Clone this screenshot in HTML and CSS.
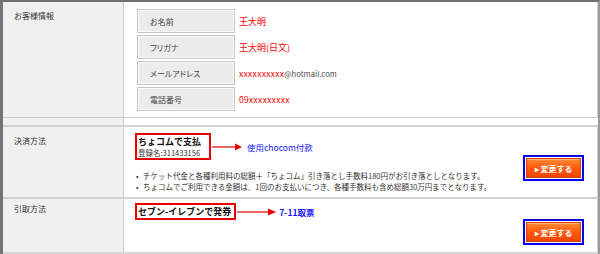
FILE: index.html
```html
<!DOCTYPE html>
<html lang="ja">
<head>
  <meta charset="UTF-8">
  <title>ご注文内容の確認</title>
  <link rel="stylesheet" href="styles.css">
</head>
<body>

<div class="panel">
  <div class="row row-customer">
    <div class="head">お客様情報</div>
    <div class="body">
      <div class="info">
        <div class="key">お名前</div>
        <div class="value">王大明</div>
        <div class="key">フリガナ</div>
        <div class="value">王大明(日文)</div>
        <div class="key">メールアドレス</div>
        <div class="value mail">xxxxxxxxxx<span class="domain">@hotmail.com</span></div>
        <div class="key">電話番号</div>
        <div class="value phone">09xxxxxxxxx</div>
      </div>
    </div>
  </div>

  <div class="row row-pay">
    <div class="head">決済方法</div>
    <div class="body">
      <div class="main">
        <div class="method">
          <div class="tag">
            <div class="tag-title">ちょコムで支払</div>
            <div class="tag-sub">登録名:311433156</div>
          </div>
          <svg class="arrow" width="30" height="8" viewBox="0 0 30 8">
            <line x1="0" y1="4" x2="24" y2="4" stroke="#e60000" stroke-width="1.2"/>
            <polygon points="23,0.5 30,4 23,7.5" fill="#e60000"/>
          </svg>
          <span class="note">使用chocom付款</span>
        </div>
        <ul class="notes">
          <li>チケット代金と各種利用料の総額＋「ちょコム」引き落とし手数料180円がお引き落としとなります。</li>
          <li>ちょコムでご利用できる金額は、1回のお支払いにつき、各種手数料も含め総額30万円までとなります。</li>
        </ul>
      </div>
      <a class="change" href="#"><span>▸ 変更する</span></a>
    </div>
  </div>

  <div class="row row-pickup">
    <div class="head">引取方法</div>
    <div class="body">
      <div class="main">
        <div class="method">
          <div class="tag tag-line">セブン-イレブンで発券</div>
          <svg class="arrow" width="39" height="8" viewBox="0 0 39 8">
            <line x1="0" y1="4" x2="32" y2="4" stroke="#e60000" stroke-width="1.2"/>
            <polygon points="31,0.5 39,4 31,7.5" fill="#e60000"/>
          </svg>
          <span class="note note-bold">7-11取票</span>
        </div>
      </div>
      <a class="change" href="#"><span>▸ 変更する</span></a>
    </div>
  </div>
</div>

</body>
</html>
```

FILE: styles.css
```css
body {
  margin: 0;
  font-family: "Noto Sans CJK JP", sans-serif;
  font-size: 8px;
  color: #333;
}

.panel {
  width: 600px;
  height: 254px;
  box-sizing: border-box;
  border-top: 2px solid #6f6f6f;
  border-left: 3px solid #74747f;
  border-right: 2px solid #9a9a9a;
  background: linear-gradient(to right, #f0f0f0 0 120px, #cccccc 120px 121px, #fff 121px);
  overflow: hidden;
}

.row {
  display: grid;
  grid-template-columns: 121px 1fr;
  box-sizing: border-box;
  border-right: 1px solid #cfcfcf;
}

.row-customer {
  height: 116px;
  border-bottom: 1px solid #cfcfcf;
  margin-bottom: 7px;
}

.row-pay {
  height: 72px;
  border-top: 2px solid #d2d2d2;
}

.row-pickup {
  height: 57px;
  border-top: 2px solid #d2d2d2;
  border-bottom: 2px solid #d8d8d8;
}

.head {
  padding: 8px 0 0 11px;
  line-height: 12px;
  color: #333;
}

.row-pay .head {
  padding-top: 8px;
}

.row-pickup .head {
  padding-top: 4px;
}

.body {
  padding-left: 11px;
}

.row-pay .body,
.row-pickup .body {
  display: flex;
}

/* customer table */
.info {
  display: grid;
  grid-template-columns: 98px auto;
  column-gap: 4px;
  row-gap: 2px;
  align-items: center;
  margin: 7px 0 0 2px;
}

.key {
  height: 24px;
  box-sizing: border-box;
  border: 1px solid #c6c6c6;
  box-shadow: inset 0 0 0 1px #f8f8f8;
  background-color: #ececec;
  padding-left: 12px;
  display: flex;
  align-items: center;
  color: #444;
  font-feature-settings: "palt";
}

.value {
  color: #f00;
  font-size: 9px;
}

.mail,
.phone {
  font-size: 8.5px;
  letter-spacing: 0.3px;
}

.domain {
  color: #444;
  font-size: 7.5px;
  letter-spacing: 0.1px;
}

/* payment / pickup */
.main {
  flex: 1;
}

.method {
  display: flex;
  align-items: center;
}

.row-pay .method {
  margin-top: 6px;
}

.row-pickup .method {
  margin-top: 4px;
}

.tag {
  border: 2px solid #e60000;
  padding: 0 8px 0 1px;
}

.tag-title {
  font-weight: bold;
  font-size: 9px;
  line-height: 13px;
  color: #111;
}

.tag-sub {
  font-size: 7.5px;
  line-height: 10px;
  color: #333;
}

.tag-line {
  font-weight: bold;
  font-size: 9px;
  line-height: 13px;
  color: #111;
  padding: 0 3px 0 1px;
}

.arrow {
  margin-left: 1px;
}

.note {
  color: #1414ff;
  font-size: 8.5px;
  margin-left: 5px;
}

.note-bold {
  font-weight: bold;
  font-size: 8.5px;
  margin-left: 3px;
}

.notes {
  list-style: none;
  margin: 10px 0 0 1px;
  padding: 0;
  font-size: 7.5px;
  line-height: 11px;
  color: #333;
  white-space: nowrap;
}

.notes li::before {
  content: "•";
  display: inline-block;
  width: 7px;
}

/* change button */
.change {
  display: block;
  width: 61px;
  height: 26px;
  box-sizing: border-box;
  border: 2px solid #0000f0;
  padding: 1px;
  background-color: #fff;
  margin-right: 13px;
  text-decoration: none;
}

.row-pay .change {
  margin-top: 28px;
}

.row-pickup .change {
  margin-top: 20px;
}

.change span {
  display: flex;
  height: 100%;
  box-sizing: border-box;
  align-items: center;
  justify-content: center;
  border: 1px solid #d84000;
  background: linear-gradient(#ff8a3a, #ff5a0a 50%, #f04400);
  box-shadow: inset 0 1px 0 rgba(255, 255, 255, 0.35);
  color: #fff;
  font-weight: bold;
  font-size: 8px;
}
```
